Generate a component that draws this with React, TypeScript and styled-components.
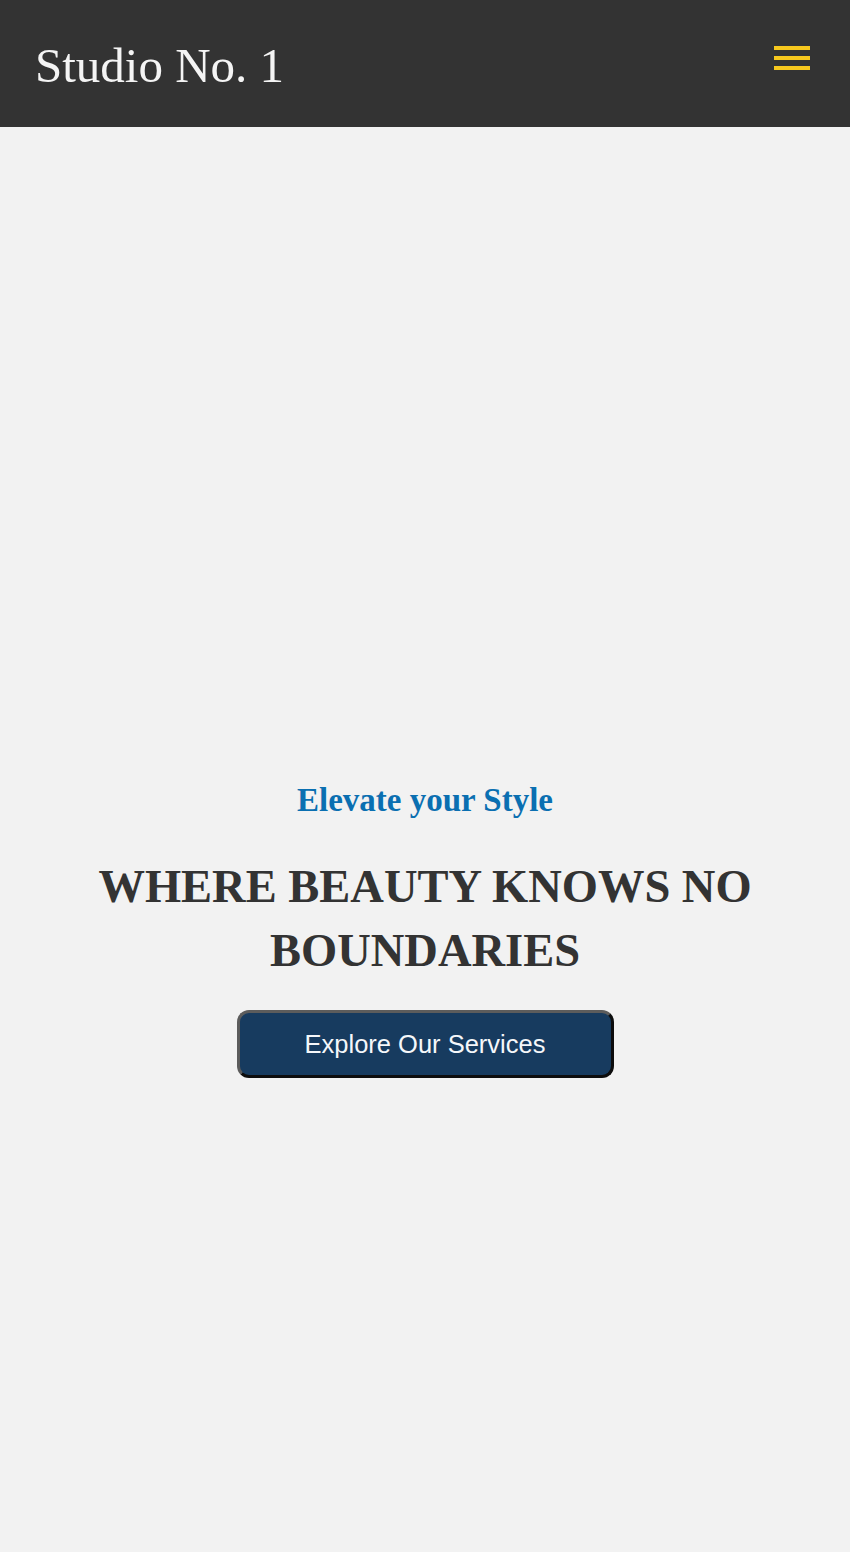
import * as React from 'react'
import styled, { createGlobalStyle } from 'styled-components'

const GlobalStyle = createGlobalStyle`
  * {
    box-sizing: border-box;
  }
  body {
    margin: 0;
    background: #f2f2f2;
    font-family: 'Liberation Serif', 'Times New Roman', serif;
  }
`

const Header = styled.header`
  height: 127px;
  background: #333333;
  display: flex;
  align-items: center;
  justify-content: space-between;
  padding: 0 40px 0 35px;
`

const Logo = styled.h1`
  margin: 0;
  font-family: 'Liberation Serif', 'Times New Roman', serif;
  font-weight: 400;
  font-size: 49px;
  line-height: 1;
  color: #f4f4f4;
  padding-top: 4px;
`

const MenuButton = styled.button`
  width: 36px;
  height: 24px;
  padding: 0;
  border: none;
  background: none;
  display: flex;
  flex-direction: column;
  justify-content: space-between;
  cursor: pointer;
  margin-top: -12px;
`

const MenuBar = styled.span`
  display: block;
  height: 4px;
  width: 100%;
  background: #f7c81e;
`

const Hero = styled.section`
  min-height: calc(100vh - 127px);
  display: flex;
  flex-direction: column;
  align-items: center;
  text-align: center;
  padding: 653px 20px 0;
`

const Tagline = styled.h2`
  margin: 0;
  font-size: 33px;
  line-height: 40px;
  font-weight: 700;
  color: #0a6fb1;
`

const Title = styled.h3`
  margin: 35px 0 0;
  font-size: 46.5px;
  line-height: 64px;
  font-weight: 700;
  color: #333333;
  max-width: 700px;
`

const CtaButton = styled.button`
  margin-top: 27px;
  width: 377px;
  height: 68px;
  border-radius: 12px;
  border: 3px solid;
  border-color: #5c5c5c #0d0d0d #0d0d0d #5c5c5c;
  background: #173b5f;
  color: #f5f7fa;
  font-family: 'Liberation Sans', Arial, sans-serif;
  font-size: 25.5px;
  cursor: pointer;
`

export default function App() {
  return (
    <>
      <GlobalStyle />
      <Header>
        <Logo>Studio No. 1</Logo>
        <MenuButton aria-label="Menu">
          <MenuBar />
          <MenuBar />
          <MenuBar />
        </MenuButton>
      </Header>
      <Hero>
        <Tagline>Elevate your Style</Tagline>
        <Title>WHERE BEAUTY KNOWS NO BOUNDARIES</Title>
        <CtaButton>Explore Our Services</CtaButton>
      </Hero>
    </>
  )
}
